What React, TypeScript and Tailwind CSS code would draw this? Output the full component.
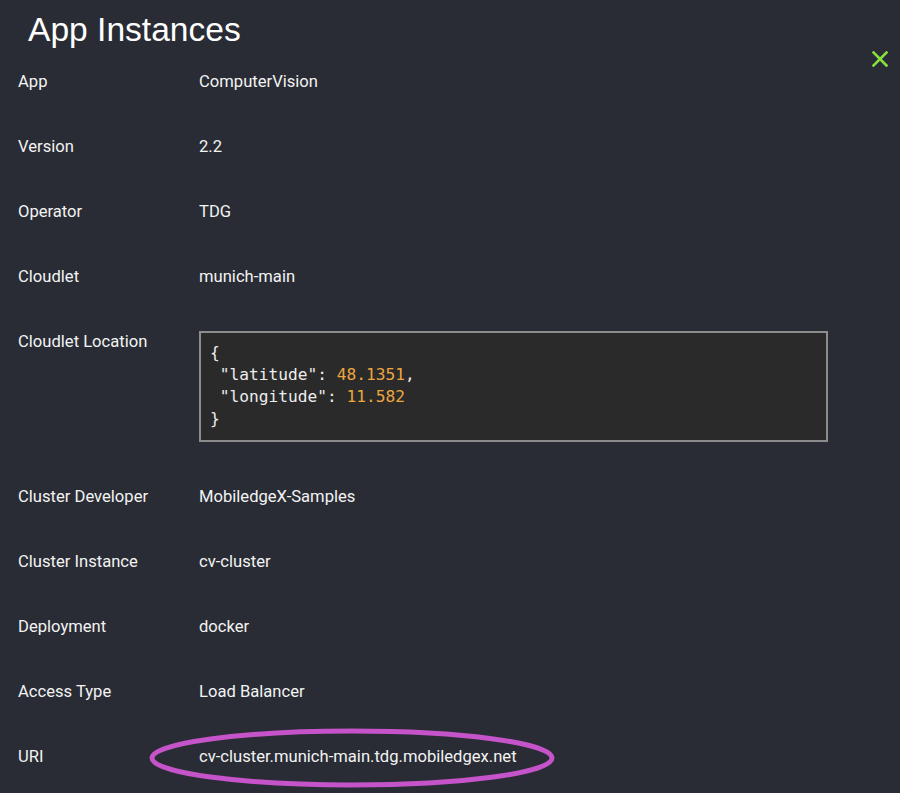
import React from 'react';

type Row = {
  label: string;
  value: string;
};

const rowsTop: Row[] = [
  { label: 'App', value: 'ComputerVision' },
  { label: 'Version', value: '2.2' },
  { label: 'Operator', value: 'TDG' },
  { label: 'Cloudlet', value: 'munich-main' },
];

const rowsBottom: Row[] = [
  { label: 'Cluster Developer', value: 'MobiledgeX-Samples' },
  { label: 'Cluster Instance', value: 'cv-cluster' },
  { label: 'Deployment', value: 'docker' },
  { label: 'Access Type', value: 'Load Balancer' },
];

function InfoRow({ label, value }: Row) {
  return (
    <div className="grid grid-cols-[181px_1fr] h-[65px] pt-[14px] text-[16.6px] leading-[20px]">
      <div>{label}</div>
      <div>{value}</div>
    </div>
  );
}

function App() {
  return (
    <div className="relative w-[900px] h-[793px] overflow-hidden bg-[#292c34] text-[#f3f3f3] font-['Roboto',sans-serif]">
      {/* Header */}
      <div className="h-[58px] pl-[28px] pt-[10px]">
        <h1 className="text-[33.6px] leading-[40px] text-white font-['Liberation_Sans',Arial,sans-serif]">
          App Instances
        </h1>
      </div>

      {/* Close button */}
      <button className="absolute top-[51px] right-[12px] w-[16px] h-[16px]">
        <svg viewBox="0 0 16 16" width="16" height="16">
          <path d="M1.5 1.5 L14.5 14.5 M14.5 1.5 L1.5 14.5" stroke="#86e13c" strokeWidth="2.6" strokeLinecap="square" fill="none" />
        </svg>
      </button>

      <div className="px-[18px]">
        {rowsTop.map((r) => (
          <InfoRow key={r.label} {...r} />
        ))}

        {/* Cloudlet location */}
        <div className="grid grid-cols-[181px_1fr] pt-[13px] pb-[31px] text-[16.6px] leading-[20px]">
          <div className="pt-[1px]">Cloudlet Location</div>
          <div>
            <pre className="w-[629px] h-[111px] border-2 border-[#8c8c8c] bg-[#2a2a2a] pl-[9px] pt-[9px] text-[16.2px] leading-[22px] text-[#ededed] font-['DejaVu_Sans_Mono',monospace]">
              {'{\n "latitude": '}
              <span className="text-[#eca540]">48.1351</span>
              {',\n "longitude": '}
              <span className="text-[#eca540]">11.582</span>
              {'\n}'}
            </pre>
          </div>
        </div>

        {rowsBottom.map((r) => (
          <InfoRow key={r.label} {...r} />
        ))}

        {/* URI with highlight ring */}
        <div className="relative grid grid-cols-[181px_1fr] h-[65px] pt-[14px] text-[16.6px] leading-[20px]">
          <div>URI</div>
          <div>cv-cluster.munich-main.tdg.mobiledgex.net</div>
          <svg className="absolute left-[130px] top-[-6px]" width="410" height="64" viewBox="0 0 410 64">
            <ellipse cx="204" cy="31" rx="200" ry="27" fill="none" stroke="#c553c9" strokeWidth="5" />
          </svg>
        </div>
      </div>
    </div>
  );
}

export default App;
